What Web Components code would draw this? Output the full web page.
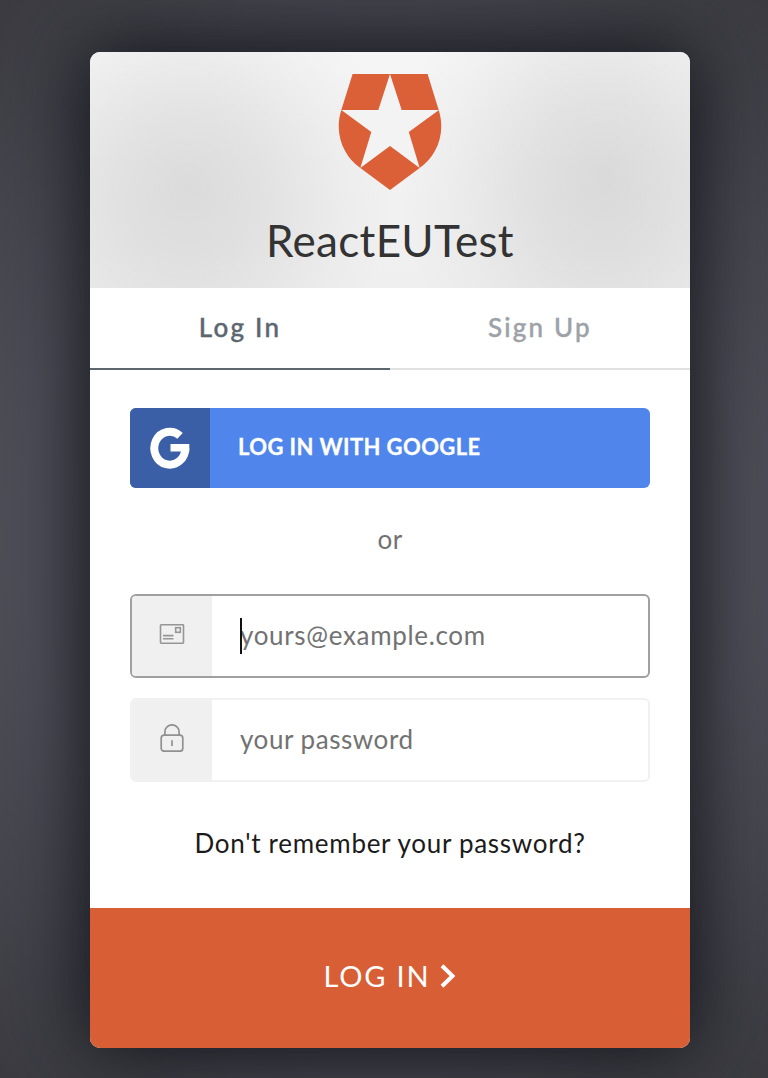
<!DOCTYPE html>
<html lang="en">
<head>
<meta charset="utf-8">
<title>ReactEUTest</title>
<style>
  html, body { margin: 0; height: 100%; }
  body {
    font-family: Lato, "Open Sans", sans-serif;
    background: radial-gradient(ellipse 660px 740px at 50% 50%, #545460 0%, #4f4f59 55%, #37373c 100%);
    overflow: hidden;
  }
</style>
</head>
<body>
<lock-widget>
  <lock-header slot="header">ReactEUTest</lock-header>
  <lock-tabs slot="tabs"></lock-tabs>
  <social-button>LOG IN WITH GOOGLE</social-button>
  <lock-divider>or</lock-divider>
  <lock-field icon="mail" active style="--ls:.67px">yours@example.com</lock-field>
  <lock-field icon="lock" style="--ls:.55px">your password</lock-field>
  <lock-link>Don't remember your password?</lock-link>
  <lock-submit slot="submit">LOG IN</lock-submit>
</lock-widget>
<script>
const define = (name, html) => customElements.define(name, class extends HTMLElement {
  constructor() {
    super();
    this.attachShadow({ mode: 'open' }).innerHTML = html;
  }
});

define('lock-widget', `
<style>
  :host { display: block; padding: 52px 78px 30px 90px; }
  .card { width: 600px; height: 996px; border-radius: 10px; background: #fff;
    box-shadow: 0 0 80px 6px #111118; display: flex; flex-direction: column; }
  .body { flex: 1; padding: 38px 40px 0; display: flex; flex-direction: column; }
</style>
<div class="card"><slot name="header"></slot><slot name="tabs"></slot>
<div class="body"><slot></slot></div><slot name="submit"></slot></div>`);

define('lock-header', `
<style>
  :host { display: flex; flex-direction: column; align-items: center; height: 236px; box-sizing: border-box;
    padding-top: 22px; border-radius: 10px 10px 0 0; color: #333;
    background:
      radial-gradient(ellipse 210px 215px at 98px 135px, rgba(0,0,0,.095), rgba(0,0,0,.065) 35%, rgba(0,0,0,.02) 75%, transparent),
      radial-gradient(ellipse 210px 235px at 515px 125px, rgba(0,0,0,.1), rgba(0,0,0,.07) 35%, rgba(0,0,0,.02) 75%, transparent),
      linear-gradient(#f5f5f5, #efefef); }
  svg { display: block; flex: none; }
  h1 { margin: 22px 0 0; font-size: 44px; line-height: 56px; font-weight: 400; letter-spacing: .3px; white-space: nowrap; }
</style>
<svg width="104" height="116" viewBox="0 0 104 116">
  <path fill="#db5f37" d="M14.600 0H89.600L100.700 36C108.500 61 97.500 82.500 82 93.800L52 116L22 93.800C6.500 82.500 -4.500 61 3.300 36Z"/>
  <path fill="#f3f3f3" d="M52 0L63.700 36H101L70.800 58L81.700 94L52 72L22.300 94L33.300 58L3.300 36H40.300Z"/>
</svg>
<h1><slot></slot></h1>`);

define('lock-tabs', `
<style>
  :host { display: flex; height: 82px; }
  span { flex: 1; box-sizing: border-box; text-align: center; font-size: 26px; line-height: 79px;
    font-weight: 500; letter-spacing: 2.2px; color: #9ca2a7; border-bottom: 2px solid #e0e1e1; -webkit-text-stroke: .4px; }
  span.on { color: #5c666f; border-color: #5c666f; }
</style>
<span class="on">Log In</span><span>Sign Up</span>`);

define('social-button', `
<style>
  :host { display: flex; height: 80px; border-radius: 6px; overflow: hidden; background: #5086ec; color: #fff; flex: none; }
  .icon { width: 80px; background: #3b5fa6; display: grid; place-items: center; }
  .label { padding-left: 28px; font-size: 22px; line-height: 77px; font-weight: 700; letter-spacing: .4px; -webkit-text-stroke: .3px; }
</style>
<div class="icon"><svg width="40" height="42" viewBox="0 0 40 42" fill="none" stroke="#fff">
  <path stroke-width="8" d="M30.050 8.800A15.500 16.500 0 1 0 35.300 21"/><path stroke-width="7.500" d="M20.500 20.800H39.300"/></svg></div>
<div class="label"><slot></slot></div>`);

define('lock-divider', `
<style>:host { display: block; text-align: center; color: #727272; font-size: 26px; line-height: 36px; margin: 33px 0 37px; letter-spacing: .3px; flex: none; }</style>
<slot></slot>`);

const icons = {
  mail: `<svg width="26" height="20" viewBox="0 0 26 20" fill="none" stroke="#969696" stroke-width="1.600">
    <rect x="1.500" y=".8" width="23" height="18.400" rx=".6"/><rect x="16.700" y="3.700" width="4.600" height="4.600"/>
    <path d="M4 11.600h10.500M4 14.800h10.500"/></svg>`,
  lock: `<svg width="24" height="28" viewBox="0 0 24 28" fill="none" stroke="#919191" stroke-width="1.700">
    <rect x="1.200" y="11.200" width="21.600" height="16" rx="3"/><path d="M4.900 11V7.900a7.100 7.100 0 0 1 14.200 0V11M12 16.300v5.700"/></svg>`
};
customElements.define('lock-field', class extends HTMLElement {
  connectedCallback() {
    const active = this.hasAttribute('active');
    this.attachShadow({ mode: 'open' }).innerHTML = `
<style>
  :host { display: flex; box-sizing: border-box; height: 84px; border: 2px solid #f1f1f1; border-radius: 6px;
    overflow: hidden; color: #727272; margin-bottom: 20px; flex: none; }
  :host([active]) { border-color: #a0a0a0; }
  .icon { width: 80px; background: #f0f0f0; display: grid; place-items: center; padding-bottom: 4px; box-sizing: border-box; }
  .text { position: relative; margin-left: 28px; font-size: 26px; line-height: 78px; letter-spacing: var(--ls, 0); }
  .caret { position: absolute; left: 0; top: 22px; width: 2px; height: 36px; background: #111; }
</style>
<div class="icon">${icons[this.getAttribute('icon')]}</div>
<div class="text"><slot></slot>${active ? '<i class="caret"></i>' : ''}</div>`;
  }
});

define('lock-link', `
<style>:host { display: block; text-align: center; color: #1b1b1b; font-size: 26px; line-height: 36px; margin-top: 23px; letter-spacing: .72px; white-space: nowrap; flex: none; }</style>
<slot></slot>`);

define('lock-submit', `
<style>
  :host { display: flex; justify-content: center; align-items: center; gap: 10px; height: 140px; box-sizing: border-box;
    padding-bottom: 4px; background: #d85e36; color: #fff; border-radius: 0 0 10px 10px; font-size: 29px; letter-spacing: 1.8px; }
  span { padding-bottom: 2px; }
</style>
<span><slot></slot></span><svg width="16" height="24" viewBox="0 0 16 24" fill="none" stroke="#fff" stroke-width="4"><path d="M2 1.800L12.500 12L2 22.200"/></svg>`);
</script>
</body>
</html>
